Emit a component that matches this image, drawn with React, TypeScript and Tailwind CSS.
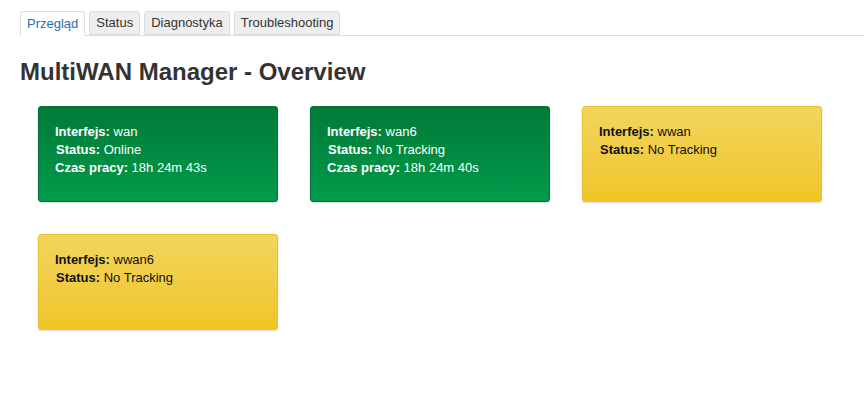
const tabs = ["Przegląd", "Status", "Diagnostyka", "Troubleshooting"];

type Iface = {
  name: string;
  status: string;
  uptime?: string;
  ok: boolean;
};

const ifaces: Iface[] = [
  { name: "wan", status: "Online", uptime: "18h 24m 43s", ok: true },
  { name: "wan6", status: "No Tracking", uptime: "18h 24m 40s", ok: true },
  { name: "wwan", status: "No Tracking", ok: false },
  { name: "wwan6", status: "No Tracking", ok: false },
];

function IfaceCard({ iface }: { iface: Iface }) {
  const tone = iface.ok
    ? "bg-gradient-to-b from-[#007a38] to-[#009b4b] border-[#00703a] text-white"
    : "bg-gradient-to-b from-[#f2d55a] to-[#f0c524] border-[#e8c034] text-[#111]";
  return (
    <div
      className={`w-[240px] h-[96px] rounded-[3px] border shadow-[0_1px_2px_rgba(0,0,0,0.15)] pl-[16px] pt-[16px] text-[13px] leading-[18px] ${tone}`}
    >
      <div>
        <b>Interfejs:</b> {iface.name}
      </div>
      <div className="pl-px">
        <b>Status:</b> {iface.status}
      </div>
      {iface.uptime && (
        <div>
          <b>Czas pracy:</b> {iface.uptime}
        </div>
      )}
    </div>
  );
}

export default function App() {
  return (
    <div className="min-h-[395px] w-[864px] bg-white font-['Liberation_Sans',Arial,sans-serif] text-[#333]">
      <div className="pt-[11px] pl-[20px]">
        <ul className="flex gap-[4px] border-b border-[#ddd] text-[13px]">
          {tabs.map((t, i) => (
            <li
              key={t}
              className={
                i === 0
                  ? "-mb-px h-[25px] px-[6px] flex items-center bg-white border border-[#ddd] border-b-white text-[#2a6fb0] rounded-t-[3px]"
                  : "h-[24px] px-[6px] flex items-center bg-[#eee] border border-[#ddd] text-[#333] rounded-t-[3px]"
              }
            >
              {t}
            </li>
          ))}
        </ul>
      </div>

      <h2 className="ml-[20px] mt-[22px] text-[24px] font-bold leading-[28px] text-[#333]">
        MultiWAN Manager - Overview
      </h2>

      <div className="ml-[38px] mt-[20px] grid grid-cols-[240px_240px_240px] gap-x-[32px] gap-y-[32px]">
        {ifaces.map((f) => (
          <IfaceCard key={f.name} iface={f} />
        ))}
      </div>
    </div>
  );
}
